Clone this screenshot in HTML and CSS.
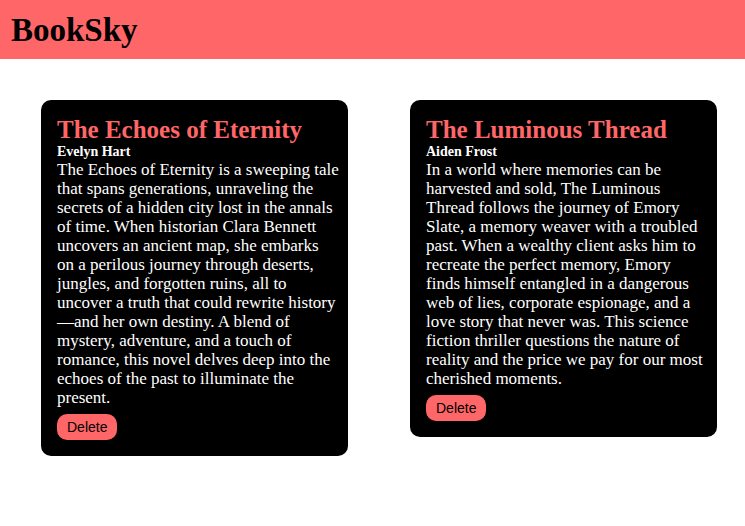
FILE: index.html
```html
<!DOCTYPE html>
<html lang="en">
<head>
<meta charset="utf-8">
<title>BookSky</title>
<link rel="stylesheet" href="styles.css">
</head>
<body>
<header class="navbar"><h1>BookSky</h1></header>
<main class="container">
<article class="book">
<h2>The Echoes of Eternity</h2>
<h5>Evelyn Hart</h5>
<p>The Echoes of Eternity is a sweeping tale that spans generations, unraveling the secrets of a hidden city lost in the annals of time. When historian Clara Bennett uncovers an ancient map, she embarks on a perilous journey through deserts, jungles, and forgotten ruins, all to uncover a truth that could rewrite history—and her own destiny. A blend of mystery, adventure, and a touch of romance, this novel delves deep into the echoes of the past to illuminate the present.</p>
<button type="button">Delete</button>
</article>
<article class="book">
<h2>The Luminous Thread</h2>
<h5>Aiden Frost</h5>
<p>In a world where memories can be harvested and sold, The Luminous Thread follows the journey of Emory Slate, a memory weaver with a troubled past. When a wealthy client asks him to recreate the perfect memory, Emory finds himself entangled in a dangerous web of lies, corporate espionage, and a love story that never was. This science fiction thriller questions the nature of reality and the price we pay for our most cherished moments.</p>
<button type="button">Delete</button>
</article>
</main>
</body>
</html>
```
FILE: styles.css
```css
* {
  margin: 0;
  padding: 0;
  box-sizing: border-box;
}

body {
  font-family: "Liberation Serif", "Times New Roman", serif;
  font-size: 16px;
  background: #fff;
}

.navbar {
  padding: 12px 11px 10px;
  background: #ff6668;
}

.navbar h1 {
  font-size: 33px;
  line-height: 37px;
}

.container {
  display: grid;
  grid-template-columns: 1fr 1fr;
  align-items: start;
  gap: 62px;
  padding: 41px 28px 41px 41px;
}

.book {
  padding: 16px 9px 16px 16px;
  border-radius: 10px;
  background: #000;
  color: #fff;
}

.book h2 {
  font-size: 25px;
  line-height: 28px;
  color: #ff6668;
}

.book h5 {
  font-size: 14px;
  line-height: 16px;
}

.book p {
  font-size: 17px;
  line-height: 19px;
}

.book button {
  display: block;
  margin-top: 7px;
  padding: 5px 10px;
  border: 0;
  border-radius: 10px;
  background: #ff6668;
  color: #000;
  font-family: "Liberation Sans", Arial, sans-serif;
  font-size: 14px;
  line-height: 16px;
}
```
